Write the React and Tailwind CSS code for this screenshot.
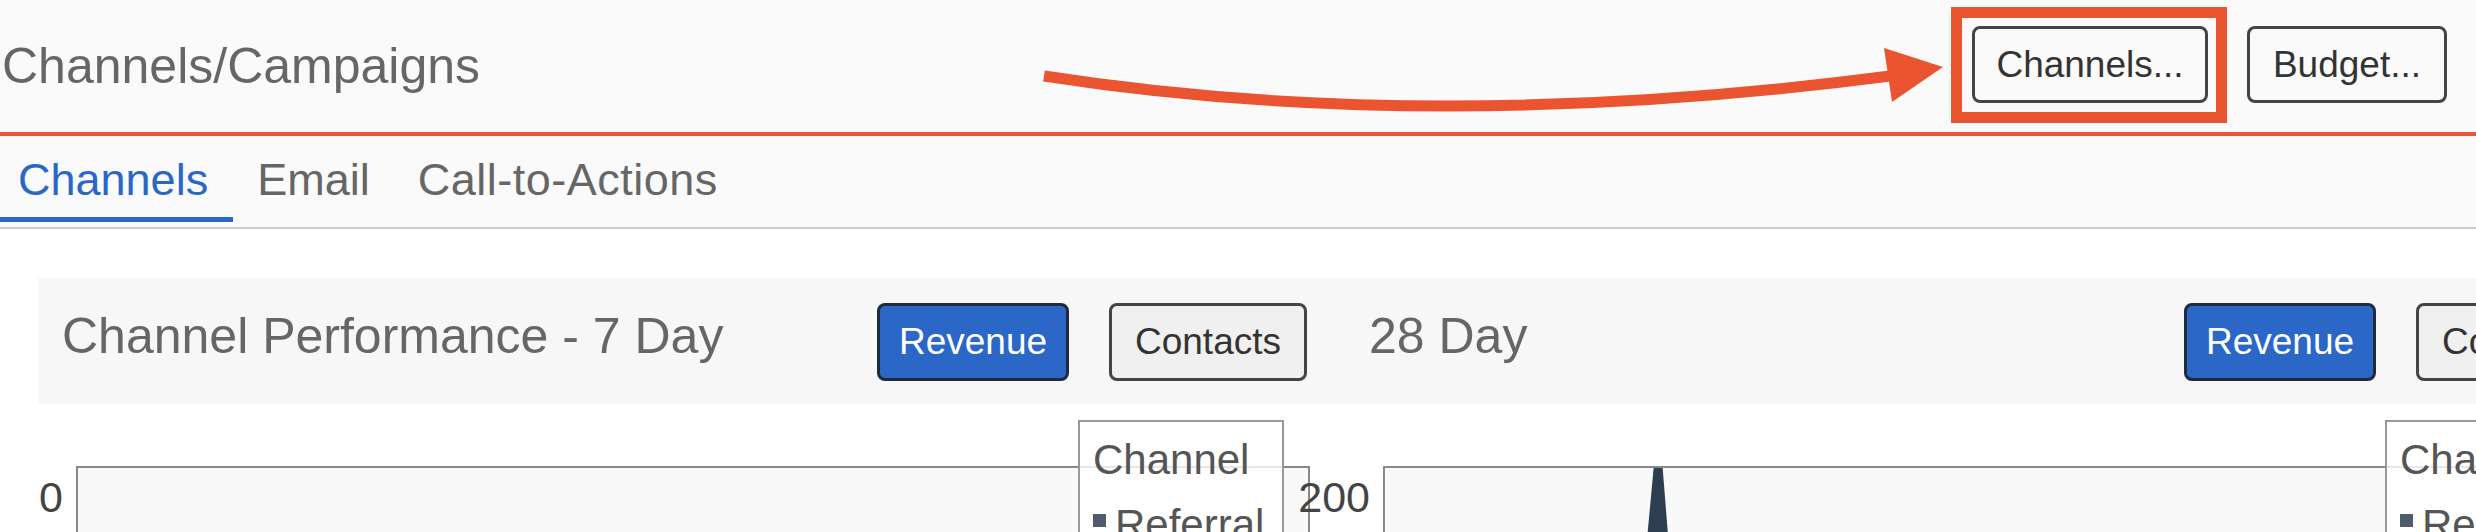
export default function App() {
  const Col = ({ title, label, spike }) => (
    <div className="flex flex-col">
      <div className="flex h-[126px] items-start bg-[#f7f7f7] pl-[24px] pr-[38px]">
        <div className="mt-[29px] whitespace-nowrap text-[50px] leading-[58px] text-[#666]">{title}</div>
        <div className="ml-auto mt-[25px] flex gap-[40px]">
          <button className="h-[78px] w-[192px] rounded-[8px] border-[3px] border-[#1f2b3b] bg-[#2b67c6] text-[37px] text-white">
            Revenue
          </button>
          <button className="h-[78px] w-[198px] rounded-[8px] border-[3px] border-[#444] bg-[#f0f0f0] text-[37px] text-[#333]">
            Contacts
          </button>
        </div>
      </div>
      <div className="relative flex items-start pt-[62px]">
        <div className="mt-[10px] flex w-[38px] justify-end pr-[13px] text-[43px] leading-[43px] whitespace-nowrap text-[#444]">
          {label}
        </div>
        <div className="relative h-[320px] w-[1234px] overflow-hidden border-x-2 border-t-2 border-[#888] bg-[#f9f9f9]">
          {spike && (
            <svg className="absolute left-0 top-0" width="600" height="200" viewBox="0 0 600 200">
              <polygon points="273.5,-52 293.6,200 250,200" fill="#2c3e50" />
            </svg>
          )}
        </div>
        <div className="absolute left-[1040px] top-[16px] h-[200px] w-[206px] border-2 border-[#999] bg-white/80 pl-[13px] pt-[13px] text-[42px] leading-[50px] text-[#555]">
          <div>Channel</div>
          <div className="mt-[15px] flex items-start">
            <span className="mt-[14px] h-[13px] w-[13px] bg-[#505b6b]" />
            <span className="ml-[9px]">Referral</span>
          </div>
        </div>
      </div>
    </div>
  );

  return (
    <div className="relative h-[532px] w-full overflow-hidden bg-white font-['Liberation_Sans',Arial,sans-serif]">
      <header className="flex h-[136px] items-start justify-between border-b-[4px] border-[#e9552f] bg-[#fafafa]">
        <h1 className="mt-[37px] pl-[2px] text-[50px] leading-[58px] text-[#666]">Channels/Campaigns</h1>
        <div className="mr-[29px] mt-[26px] flex gap-[39px]">
          <div className="relative">
            <div className="pointer-events-none absolute -bottom-[20px] -left-[21px] -right-[19px] -top-[19px] border-[11px] border-[#e9552f]" />
            <button className="h-[77px] w-[236px] rounded-[8px] border-[3px] border-[#444] bg-[#fafafa] text-[37px] text-[#333]">
              Channels...
            </button>
          </div>
          <button className="h-[77px] w-[200px] rounded-[8px] border-[3px] border-[#444] bg-[#fafafa] text-[37px] text-[#333]">
            Budget...
          </button>
        </div>
      </header>

      <nav className="flex h-[93px] items-start border-b-2 border-[#ccc] bg-[#fafafa] text-[45px] leading-[50px]">
        <div className="flex flex-col pl-[18px] pr-[25px] pt-[19px] text-[#2b67c6]">
          <span>Channels</span>
          <span className="-ml-[18px] -mr-[25px] mt-[12px] h-[5px] bg-[#2b67c6]" />
        </div>
        <div className="px-[24px] pt-[19px] text-[#666]">Email</div>
        <div className="px-[24px] pt-[19px] tracking-[0.5px] text-[#666]">Call-to-Actions</div>
      </nav>

      <div className="ml-[38px] mt-[49px] grid w-[2614px] grid-cols-2">
        <Col title="Channel Performance - 7 Day" label="0" />
        <Col title="28 Day" label="200" spike />
      </div>

      <svg
        className="pointer-events-none absolute left-0 top-0"
        width="2476"
        height="140"
        viewBox="0 0 2476 140"
      >
        <path d="M1044 76 Q1431 136 1890 76" fill="none" stroke="#ea5430" strokeWidth="11" />
        <polygon points="1884,48 1943,67 1892,102" fill="#ea5430" />
      </svg>
    </div>
  );
}
